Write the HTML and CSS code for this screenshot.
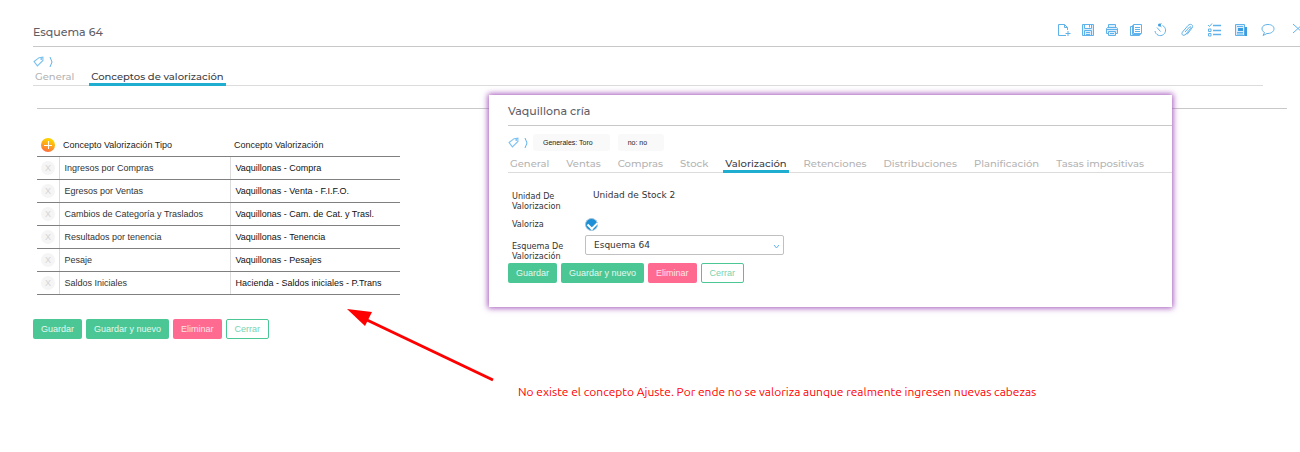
FILE: index.html
```html
<!DOCTYPE html>
<html lang="es">

<head>
  <meta charset="UTF-8">
  <meta name="viewport" content="width=device-width, initial-scale=1.0">
  <title>Esquema 64</title>
  <link rel="stylesheet" href="styles.css">
</head>

<body>
  <div class="page">
    <header class="header">
      <h1>Esquema 64</h1>
      <div class="toolbar">
        <button aria-label="Nuevo"><svg viewBox="0 0 14 14"><path d="M9 12.5H1.500V1.500H7.500L10.500 4.500V7M7.500 1.500V4.500H10.500M11 8V13M8.500 10.500H13.500"/></svg></button>
        <button aria-label="Guardar"><svg viewBox="0 0 14 14"><path class="tint" d="M1.500 1.500H12.500V12.500H1.500ZM3.500 1.500V5.500H10.500V1.500M8.500 2V4.500M3.500 12.500V7.500H10.500V12.500M5 9.500H9M5 11.500H9"/></svg></button>
        <button aria-label="Imprimir"><svg viewBox="0 0 14 14"><path class="tint" d="M3.500 4.500V1.500H10.500V4.500M3.500 10.500H1.500V5.500L2.500 4.500H11.500L12.500 5.500V10.500H10.500M3.500 8.500H10.500V12.500H3.500ZM2 6.500H12M5 10.500H9"/></svg></button>
        <button aria-label="Copiar"><svg viewBox="0 0 14 14"><path d="M4.500 1.500H12.500V10.500H4.500ZM4.500 2.500H3.500V11.500H11.500V10.500M3.500 3.500H1.500V12.500H10.500V11.500M6 4.500H11M6 6.500H11M6 8.500H11"/></svg></button>
        <button aria-label="Historial"><svg viewBox="0 0 14 14"><path d="M9.500 2.500A5.300 5.300 0 1 1 2 8M7.500 8.500L4 4.500M8.500 .5L6 2L8.500 4"/><circle class="fill" cx="6.500" cy="2" r="1.500"/></svg></button>
        <button aria-label="Adjuntos"><svg viewBox="0 0 14 14"><path d="M5 9L9.500 4C10.500 3 11.500 4 10.500 5.500L6 11C4 13.500 .5 12 2.500 9L8 2.500C10.500 0 14 2 12 5L7 11.500"/></svg></button>
        <button aria-label="Tareas"><svg viewBox="0 0 14 14"><path d="M1 2L2.500 3.500L5 .5M1.500 6H4V8.500H1.500ZM1.500 10.500H4V13H1.500Z"/><path d="M6 2.500H14M6 7.500H14M6 11.500H14" stroke-width="1.500"/></svg></button>
        <button aria-label="Noticias"><svg viewBox="0 0 14 14"><path class="tint" d="M1.500 1.500H10.500V12.500H1.500ZM3 3.500H9M3 9.500H9M3 11H9"/><path class="fill" d="M4 5H9V8H4ZM11 4H13V13H10.500Z"/></svg></button>
        <button aria-label="Comentarios"><svg viewBox="0 0 14 14"><path d="M3.500 9.500C-.5 7.500 0 1.500 7 1.500C15 1.500 15 10 7 10.500H6L2 12.500Z"/></svg></button>
        <button aria-label="Cerrar ventana" class="close"><svg viewBox="0 0 14 14"><path d="M2 1L12 10M12 1L2 10"/></svg></button>
      </div>
    </header>

    <div class="tags">
      <svg class="tag" viewBox="0 0 10 10"><path d="M1 5L5.500 1.500L9 1L9 4L4 9Z"/><circle cx="7.500" cy="2.800" r=".4"/></svg>
      <svg class="chevron" viewBox="0 0 5 10"><path d="M1 0L3 5L1 10"/></svg>
    </div>
    <nav class="tabs">
      <a href="#general">General</a>
      <a href="#conceptos" class="active">Conceptos de valorización</a>
    </nav>

    <main class="content">
      <table class="concepts">
        <thead>
          <tr>
            <th class="action"><button class="add" aria-label="Agregar"></button></th>
            <th>Concepto Valorización Tipo</th>
            <th>Concepto Valorización</th>
          </tr>
        </thead>
        <tbody>
          <tr>
            <td class="action"><button class="remove">X</button></td>
            <td>Ingresos por Compras</td>
            <td>Vaquillonas - Compra</td>
          </tr>
          <tr>
            <td class="action"><button class="remove">X</button></td>
            <td>Egresos por Ventas</td>
            <td>Vaquillonas - Venta - F.I.F.O.</td>
          </tr>
          <tr>
            <td class="action"><button class="remove">X</button></td>
            <td>Cambios de Categoría y Traslados</td>
            <td>Vaquillonas - Cam. de Cat. y Trasl.</td>
          </tr>
          <tr>
            <td class="action"><button class="remove">X</button></td>
            <td>Resultados por tenencia</td>
            <td>Vaquillonas - Tenencia</td>
          </tr>
          <tr>
            <td class="action"><button class="remove">X</button></td>
            <td>Pesaje</td>
            <td>Vaquillonas - Pesajes</td>
          </tr>
          <tr>
            <td class="action"><button class="remove">X</button></td>
            <td>Saldos Iniciales</td>
            <td>Hacienda - Saldos iniciales - P.Trans</td>
          </tr>
        </tbody>
      </table>
    </main>

    <div class="buttons">
      <button class="btn">Guardar</button>
      <button class="btn">Guardar y nuevo</button>
      <button class="btn btn-delete">Eliminar</button>
      <button class="btn btn-close">Cerrar</button>
    </div>
  </div>

  <section class="modal">
    <h2>Vaquillona cría</h2>
    <div class="tags">
      <svg class="tag" viewBox="0 0 10 10"><path d="M1 5L5.500 1.500L9 1L9 4L4 9Z"/><circle cx="7.500" cy="2.800" r=".4"/></svg>
      <svg class="chevron" viewBox="0 0 5 10"><path d="M1 0L3 5L1 10"/></svg>
      <span class="chip">Generales: Toro</span>
      <span class="chip">no: no</span>
    </div>
    <nav class="tabs">
      <a href="#m-general">General</a>
      <a href="#m-ventas">Ventas</a>
      <a href="#m-compras">Compras</a>
      <a href="#m-stock">Stock</a>
      <a href="#m-valorizacion" class="active">Valorización</a>
      <a href="#m-retenciones">Retenciones</a>
      <a href="#m-distribuciones">Distribuciones</a>
      <a href="#m-planificacion">Planificación</a>
      <a href="#m-tasas">Tasas impositivas</a>
    </nav>

    <form class="form">
      <label for="unidad">Unidad De Valorizacion</label>
      <output id="unidad">Unidad de Stock 2</output>
      <label for="valoriza">Valoriza</label>
      <input type="checkbox" id="valoriza" checked>
      <label for="esquema">Esquema De Valorización</label>
      <div class="select">
        <select id="esquema">
          <option>Esquema 64</option>
        </select>
        <svg viewBox="0 0 7 5"><path d="M1 1L3.500 4L6 1"/></svg>
      </div>
    </form>

    <div class="buttons">
      <button class="btn">Guardar</button>
      <button class="btn">Guardar y nuevo</button>
      <button class="btn btn-delete">Eliminar</button>
      <button class="btn btn-close">Cerrar</button>
    </div>
  </section>

  <!-- nota con flecha hacia la tabla -->
  <svg class="arrow" viewBox="0 0 148 74">
    <path class="shaft" d="M146 71L20 11"/>
    <path class="head" d="M0 0L25 3L18 17Z"/>
  </svg>
  <p class="note">No existe el concepto Ajuste. Por ende no se valoriza aunque realmente ingresen nuevas cabezas</p>
</body>

</html>
```

FILE: styles.css
```css
* {
  box-sizing: border-box;
}

body {
  position: relative;
  min-height: 100vh;
  margin: 0;
  background: #fff;
  color: #333;
  font-family: "Liberation Sans", Arial, sans-serif;
  font-size: 9px;
  overflow-x: hidden;
}

button {
  padding: 0;
  border: none;
  background: none;
  font-family: inherit;
  font-size: 9px;
  cursor: pointer;
}

.page {
  padding: 17px 0 0 33px;
}

.header {
  display: flex;
  justify-content: space-between;
  height: 30px;
  border-bottom: 1px solid #c8c8c8;
}

h1,
h2 {
  margin: 0;
  color: #5f6066;
  font-family: Montserrat, Inter, sans-serif;
  font-size: 11px;
  font-weight: 500;
  line-height: 30px;
}

.toolbar {
  display: flex;
  gap: 10px;
  height: 26px;
  margin-right: -5px;
}

.toolbar svg {
  display: block;
  width: 14px;
  height: 14px;
}

.toolbar button:nth-child(n+6) {
  margin-left: 3px;
}

.toolbar .close:last-child {
  margin-left: 6px;
}

svg {
  fill: none;
  stroke: #5fb2ea;
}

svg .fill {
  fill: #3d9be0;
  stroke: none;
}

svg .tint {
  fill: #dceefb;
}

.tags {
  display: flex;
  align-items: center;
  height: 17px;
  margin-top: 6px;
}

.tag {
  width: 11px;
  height: 11px;
  margin-right: 5px;
  stroke: #7cc2f0;
}

.chevron {
  width: 5px;
  height: 10px;
}

.tabs {
  display: flex;
  gap: 13px;
  height: 16px;
  border-bottom: 1px solid #dcdcdc;
  font-family: Montserrat, Inter, sans-serif;
  font-size: 10px;
  font-weight: 500;
  line-height: 13px;
}

.tabs a {
  height: 16px;
  padding: 0 2px;
  color: #b4b4b4;
  text-decoration: none;
}

.tabs .active {
  border-bottom: 3px solid #1fadd0;
  color: #3c3c44;
}

.page .tabs {
  margin-right: 37px;
}

.content {
  margin: 22px 13px 0 4px;
  padding-top: 26px;
  border-top: 1px solid #c8c8c8;
}

.concepts {
  width: 363px;
  border-collapse: collapse;
  table-layout: fixed;
}

.concepts th,
.concepts td {
  height: 23px;
  padding: 0 0 0 5px;
  border-bottom: 1px solid #808080;
  text-align: left;
  font-weight: 400;
}

.concepts th {
  height: 21px;
  padding-left: 4px;
  color: #222;
}

.concepts td + td {
  border-left: 1px solid #dcdcdc;
}

.concepts td:last-child {
  color: #111;
}

.concepts .action {
  width: 22px;
  padding: 0 0 0 4px;
}

.concepts th:last-child {
  width: 170px;
}

.add,
.remove {
  display: block;
  width: 14px;
  height: 14px;
  border-radius: 50%;
}

.add {
  background:
    linear-gradient(#fff, #fff) center / 8px 1px no-repeat,
    linear-gradient(#fff, #fff) center / 1px 8px no-repeat,
    linear-gradient(200deg, #fdd000 20%, #ff9f1c 55%, #ff5e4a);
}

.remove {
  background: #f5f5f5;
  color: #d4d4d4;
}

.buttons {
  display: flex;
  gap: 4px;
}

.page .buttons {
  margin-top: 24px;
}

.btn {
  height: 20px;
  padding: 0 8px;
  border-radius: 2px;
  background: #4bc795;
  color: #e4f8ef;
}

.btn-delete {
  background: #ff6b90;
  color: #ffe3ea;
}

.btn-close {
  border: 1px solid #4bc795;
  background: #fff;
  color: #79d3b0;
}

.modal {
  position: absolute;
  top: 95px;
  left: 489px;
  right: 128px;
  height: 212px;
  padding-left: 19px;
  background: #fff;
  box-shadow: 0 0 6px 1px #a050b8;
}

.modal h2 {
  height: 31px;
  border-bottom: 1px solid #c8c8c8;
  line-height: 32px;
}

.modal .tags {
  margin-top: 8px;
}

.modal .tabs {
  margin-top: 6px;
}

.chip {
  height: 17px;
  margin-left: 4px;
  padding: 0 17px 0 10px;
  border-radius: 3px;
  background: #f9f9f9;
  color: #222;
  font-size: 7px;
  line-height: 18px;
}

.chip + .chip {
  margin-left: 8px;
}

.form {
  display: grid;
  grid-template-columns: 73px 199px;
  grid-template-rows: 28px 22px 24px;
  margin: 15px 0 0 4px;
  font-family: "DejaVu Sans Condensed", "DejaVu Sans", sans-serif;
  line-height: 10px;
}

.form label {
  width: 56px;
  padding-top: 3px;
}

.form output {
  padding: 2px 0 0 8px;
  font-family: "DejaVu Sans", sans-serif;
}

.form input {
  appearance: none;
  width: 13px;
  height: 13px;
  margin: 2px 0 0;
  border: 1px solid #9cc4de;
  border-radius: 50%;
  background: #1d8fd6;
}

.form input:checked::before {
  content: '';
  display: block;
  width: 7px;
  height: 5px;
  margin: 2px 0 0 2px;
  border-left: 2px solid #fff;
  border-bottom: 2px solid #fff;
  transform: rotate(-45deg);
}

.select {
  position: relative;
  margin-top: -3px;
}

.select select {
  appearance: none;
  width: 199px;
  height: 20px;
  padding: 0 8px;
  border: 1px solid #c0c0c0;
  border-radius: 2px;
  background: #fff;
  color: #333;
  font-family: "DejaVu Sans", sans-serif;
  font-size: 9px;
}

.select svg {
  position: absolute;
  top: 9px;
  right: 4px;
  width: 7px;
  height: 5px;
}

.modal .buttons {
  margin-top: 1px;
}

.arrow {
  position: absolute;
  top: 309px;
  left: 347px;
  width: 148px;
  height: 74px;
}

.arrow .shaft {
  stroke: #f00;
  stroke-width: 3;
}

.arrow .head {
  fill: #f00;
  stroke: none;
}

.note {
  position: absolute;
  top: 384px;
  left: 518px;
  margin: 0;
  color: #f00;
  font-family: Ubuntu, "Noto Sans", sans-serif;
  font-size: 12px;
  line-height: 16px;
  white-space: nowrap;
}
```
